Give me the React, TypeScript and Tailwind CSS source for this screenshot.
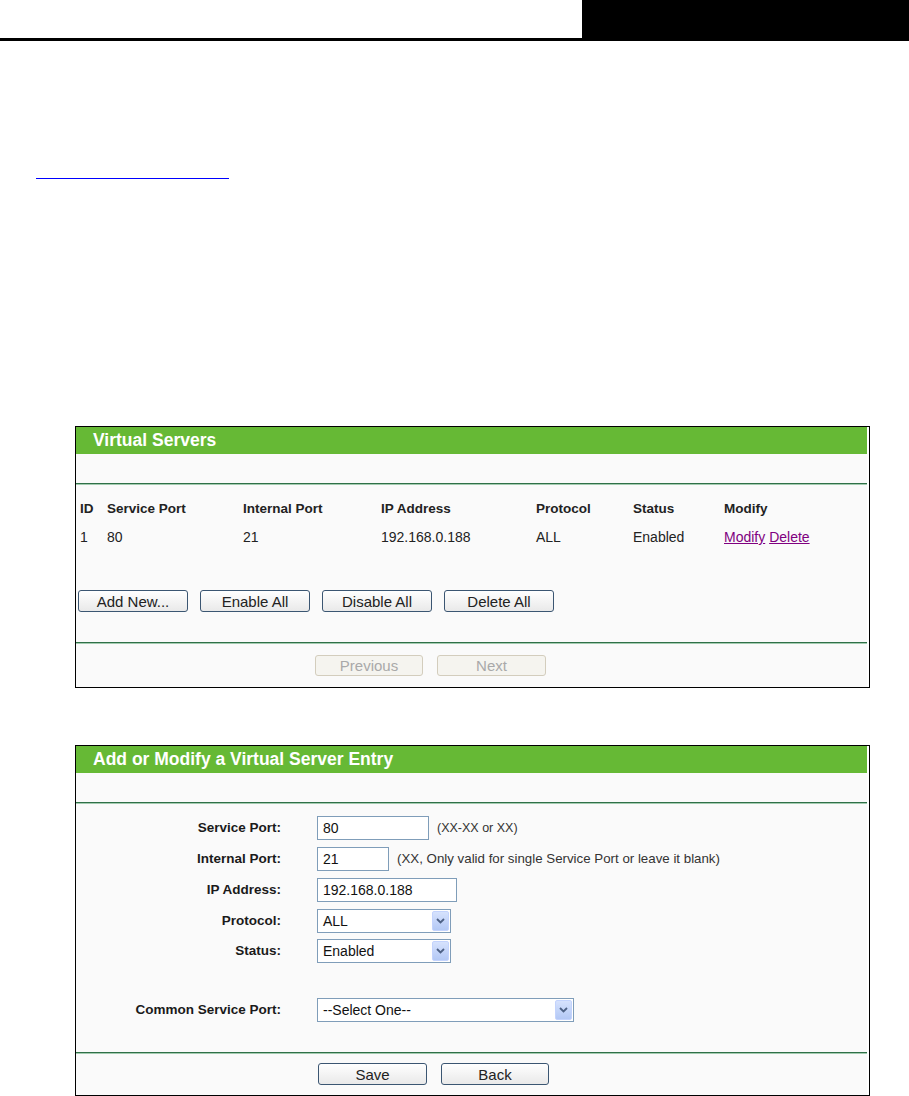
import type { ReactNode } from 'react'

const font = "font-['Liberation_Sans',Arial,sans-serif]"

function GreenRule() {
  return <div className="h-[2px] border-t border-b border-t-[#2f7047] border-b-[#a3cbb0]" />
}

function Panel({ title, children }: { title: string; children: ReactNode }) {
  return (
    <div className="ml-[75px] w-[795px] border border-black bg-white pl-0 pr-[2px]">
      <div className="bg-[#fafafa]">
        <div className="flex h-[27px] items-center bg-[#66b935] pl-[17px] text-[17.5px] font-bold leading-none text-white">
          {title}
        </div>
        <div className="h-[29px]" />
        <GreenRule />
        {children}
      </div>
    </div>
  )
}

function Btn({ children, disabled, w = 'w-[110px]' }: { children: ReactNode; disabled?: boolean; w?: string }) {
  return (
    <button
      type="button"
      className={
        disabled
          ? `${w} h-[21px] rounded-[3px] border border-[#d3cdbd] bg-[#f5f4ef] text-[15px] leading-none text-[#a9a9a9]`
          : `${w} h-[22px] rounded-[3px] border border-[#3b5672] bg-gradient-to-b from-white to-[#e9e9e9] text-[15px] leading-none text-[#222]`
      }
    >
      {children}
    </button>
  )
}

function Input({ value, w }: { value: string; w: string }) {
  return (
    <div className={`${w} flex h-[24px] items-center border border-[#7f9db9] bg-white pl-[5px] text-[14px] text-[#111]`}>
      {value}
    </div>
  )
}

function Select({ value, w }: { value: string; w: string }) {
  return (
    <div className={`${w} flex h-[24px] items-center justify-between border border-[#7f9db9] bg-white pl-[5px] pr-px text-[14px] text-[#111]`}>
      <span>{value}</span>
      <span className="flex h-[20px] w-[17px] items-center justify-center rounded-[2px] border border-[#c3d3fd] bg-gradient-to-b from-[#d6e2fd] to-[#b3c8f5]">
        <svg width="9" height="6" viewBox="0 0 9 6" fill="none" stroke="#4d6185" strokeWidth="1.8">
          <path d="M1 1l3.5 3.5L8 1" />
        </svg>
      </span>
    </div>
  )
}

function FormRow({ label, children, className = '' }: { label: string; children: ReactNode; className?: string }) {
  return (
    <div className={`flex items-center ${className}`}>
      <div className="w-[205px] text-right text-[13.5px] font-bold text-[#1a1a1a]">{label}</div>
      <div className="ml-[36px] flex items-center">{children}</div>
    </div>
  )
}

const cols = 'grid grid-cols-[27px_136px_138px_155px_97px_91px_1fr] pl-[4px]'

export default function App() {
  return (
    <div className={`h-[1096px] w-[909px] overflow-hidden bg-white ${font}`}>
      <div className="flex h-[41px] items-end">
        <div className="h-[3px] w-[582px] bg-black" />
        <div className="h-[41px] flex-1 bg-black" />
      </div>

      <div className="ml-[36px] mt-[137px] h-px w-[193px] bg-[#0000ff]" />

      <div className="mt-[247px]">
        <Panel title="Virtual Servers">
          <div className="pt-[10px]">
            <div className={`${cols} h-[28px] items-center text-[13.5px] font-bold text-[#222]`}>
              <span>ID</span>
              <span>Service Port</span>
              <span>Internal Port</span>
              <span>IP Address</span>
              <span>Protocol</span>
              <span>Status</span>
              <span>Modify</span>
            </div>
            <div className={`${cols} h-[29px] items-center text-[14px] text-[#222]`}>
              <span>1</span>
              <span>80</span>
              <span>21</span>
              <span>192.168.0.188</span>
              <span>ALL</span>
              <span>Enabled</span>
              <span className="text-[#800080]">
                <a className="underline">Modify</a> <a className="underline">Delete</a>
              </span>
            </div>
          </div>
          <div className="mt-[38px] flex gap-[12px] pl-[2px]">
            <Btn>Add New...</Btn>
            <Btn>Enable All</Btn>
            <Btn>Disable All</Btn>
            <Btn>Delete All</Btn>
          </div>
          <div className="h-[30px]" />
          <GreenRule />
          <div className="flex gap-[14px] pb-[11px] pl-[239px] pt-[11px]">
            <Btn disabled w="w-[108px]">Previous</Btn>
            <Btn disabled w="w-[109px]">Next</Btn>
          </div>
        </Panel>
      </div>

      <div className="mt-[57px]">
        <Panel title="Add or Modify a Virtual Server Entry">
          <div className="flex flex-col gap-[7px] pt-[12px]">
            <FormRow label="Service Port:">
              <Input value="80" w="w-[112px]" />
              <span className="ml-[8px] text-[12.5px] text-[#333]">(XX-XX or XX)</span>
            </FormRow>
            <FormRow label="Internal Port:">
              <Input value="21" w="w-[72px]" />
              <span className="ml-[8px] text-[13.3px] text-[#333]">
                (XX, Only valid for single Service Port or leave it blank)
              </span>
            </FormRow>
            <FormRow label="IP Address:">
              <Input value="192.168.0.188" w="w-[140px]" />
            </FormRow>
            <FormRow label="Protocol:">
              <Select value="ALL" w="w-[134px]" />
            </FormRow>
            <FormRow label="Status:" className="-mt-px">
              <Select value="Enabled" w="w-[134px]" />
            </FormRow>
            <FormRow label="Common Service Port:" className="mt-[28px]">
              <Select value="--Select One--" w="w-[257px]" />
            </FormRow>
          </div>
          <div className="h-[30px]" />
          <GreenRule />
          <div className="flex gap-[14px] pb-[10px] pl-[242px] pt-[9px]">
            <Btn w="w-[109px]">Save</Btn>
            <Btn w="w-[108px]">Back</Btn>
          </div>
        </Panel>
      </div>
    </div>
  )
}
